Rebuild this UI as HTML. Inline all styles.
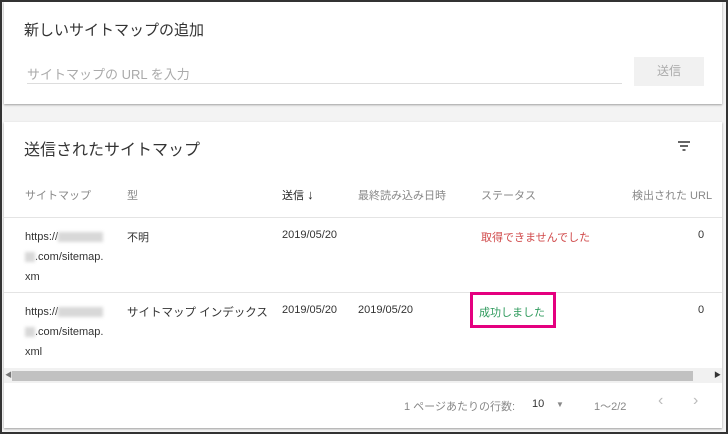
<!DOCTYPE html>
<html><head><meta charset="utf-8"><style>
*{margin:0;padding:0;box-sizing:border-box}
body{width:728px;height:434px;background:#f3f3f3;font-family:"Liberation Sans","Noto Sans CJK JP",sans-serif;position:relative;overflow:hidden}
.a{position:absolute;white-space:nowrap}
.card{position:absolute;background:#fff;box-shadow:0 1px 2px rgba(0,0,0,.35)}
.s{font-size:11px;color:#333}
.h{font-size:11px;color:#888}
.blur{display:inline-block;background:#d8d8d8;filter:blur(1.5px);height:10px;vertical-align:middle}
</style></head><body>
<div class="card" style="left:4px;top:2px;width:718px;height:102px"></div>
<div class="a" style="left:24px;top:19px;font-size:15px;color:#333">新しいサイトマップの追加</div>
<div class="a" style="left:27px;top:64px;font-size:13px;color:#aaa">サイトマップの URL を入力</div>
<div class="a" style="left:27px;top:83px;width:595px;height:1px;background:#ddd"></div>
<div class="a" style="left:634px;top:57px;width:70px;height:29px;background:#f1f1f1;color:#aaa;font-size:12px;text-align:center;line-height:29px">送信</div>
<div class="card" style="left:4px;top:122px;width:718px;height:306px"></div>
<div class="a" style="left:24px;top:136px;font-size:16px;color:#333">送信されたサイトマップ</div>
<svg class="a" style="left:677px;top:140px" width="14" height="12"><path d="M1 2h12M3 6h8M5.5 10h3" stroke="#333" stroke-width="1.6"/></svg>
<div class="a h" style="left:25px;top:187px">サイトマップ</div>
<div class="a h" style="left:127px;top:187px">型</div>
<div class="a s" style="left:282px;top:187px;color:#222">送信 <span style="font-size:13px">↓</span></div>
<div class="a h" style="left:358px;top:187px">最終読み込み日時</div>
<div class="a h" style="left:481px;top:187px">ステータス</div>
<div class="a h" style="left:632px;top:187px">検出された URL</div>
<div class="a" style="left:4px;top:217px;width:718px;height:1px;background:#e4e4e4"></div>
<div class="a s" style="left:25px;top:227px;line-height:20px">https://<span class="blur" style="width:45px"></span><br><span class="blur" style="width:10px"></span>.com/sitemap.<br>xm</div>
<div class="a s" style="left:127px;top:229px">不明</div>
<div class="a s" style="left:282px;top:229px">2019/05/20</div>
<div class="a s" style="left:481px;top:229px;color:#d0494a">取得できませんでした</div>
<div class="a s" style="left:698px;top:229px">0</div>
<div class="a" style="left:4px;top:292px;width:718px;height:1px;background:#e4e4e4"></div>
<div class="a s" style="left:25px;top:302px;line-height:20px">https://<span class="blur" style="width:45px"></span><br><span class="blur" style="width:10px"></span>.com/sitemap.<br>xml</div>
<div class="a s" style="left:127px;top:304px;font-size:11.5px">サイトマップ インデックス</div>
<div class="a s" style="left:282px;top:304px">2019/05/20</div>
<div class="a s" style="left:358px;top:304px">2019/05/20</div>
<div class="a" style="left:470px;top:292px;width:86px;height:36px;border:3px solid #e4007f"></div>
<div class="a s" style="left:479px;top:304px;color:#2e9a5c">成功しました</div>
<div class="a s" style="left:698px;top:304px">0</div>
<div class="a" style="left:4px;top:368px;width:718px;height:15px;background:#f1f1f1"></div>
<div class="a" style="left:12px;top:371px;width:681px;height:10px;background:#c1c1c1"></div>
<div class="a" style="left:5px;top:370px;font-size:7px;color:#777">◀</div>
<div class="a" style="left:714px;top:370px;font-size:7px;color:#333">▶</div>
<div class="a h" style="left:404px;top:398px">1 ページあたりの行数:</div>
<div class="a s" style="left:532px;top:398px">10</div>
<div class="a" style="left:556px;top:400px;font-size:8px;color:#888">▼</div>
<div class="a h" style="left:594px;top:398px">1〜2/2</div>
<div class="a" style="left:658px;top:392px;font-size:16px;color:#bbb">‹</div>
<div class="a" style="left:693px;top:392px;font-size:16px;color:#bbb">›</div>
<div class="a" style="left:0;top:0;width:728px;height:434px;border:2px solid #333"></div>
</body></html>
